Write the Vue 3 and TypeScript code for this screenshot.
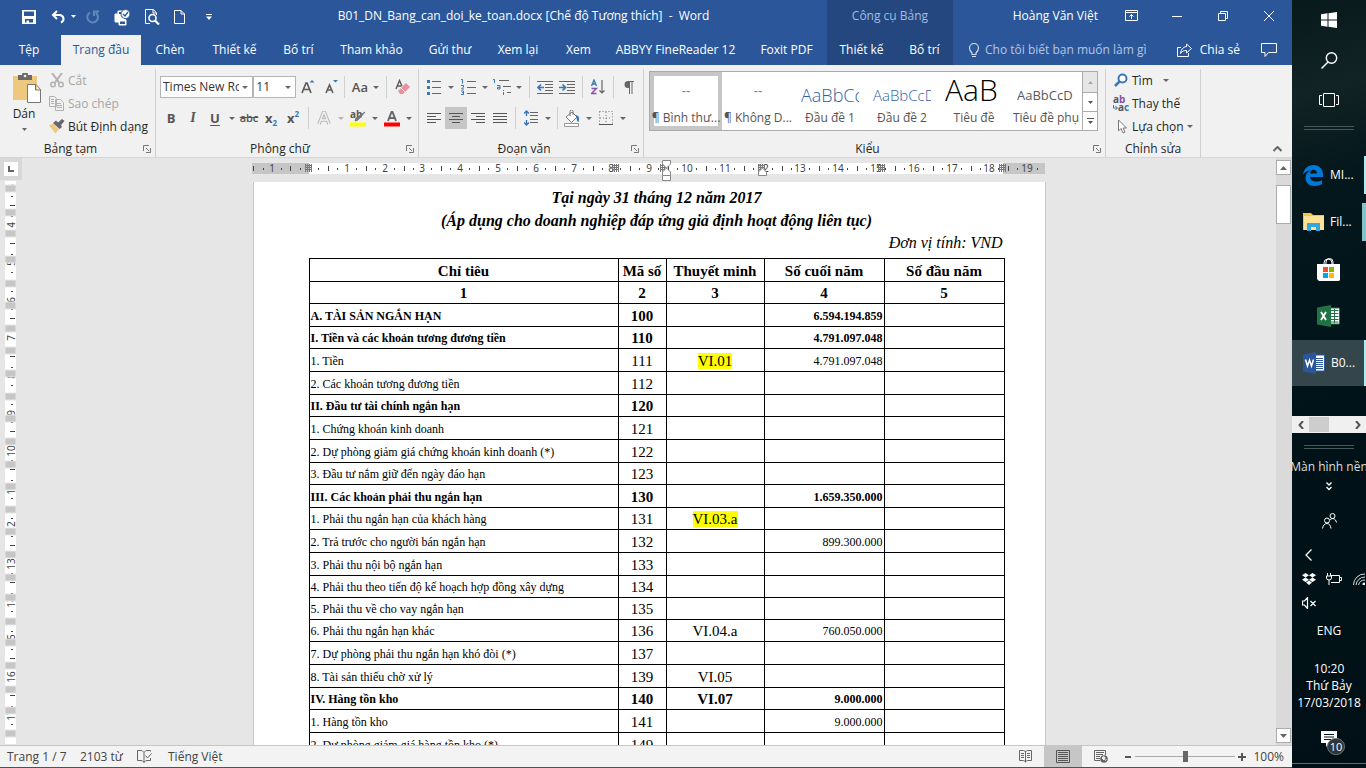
<script setup lang="ts">
import { ref } from 'vue'

interface Row {
  name: string
  code: string
  note?: string
  end?: string
  bold?: boolean
  mark?: boolean
  low?: boolean
}

const rows: Row[] = [
  { name: 'A. TÀI SẢN NGẮN HẠN', code: '100', end: '6.594.194.859', bold: true },
  { name: 'I. Tiền và các khoản tương đương tiền', code: '110', end: '4.791.097.048', bold: true, low: true },
  { name: '1. Tiền', code: '111', note: 'VI.01', end: '4.791.097.048', mark: true },
  { name: '2. Các khoản tương đương tiền', code: '112' },
  { name: 'II. Đầu tư tài chính ngắn hạn', code: '120', bold: true, low: true },
  { name: '1. Chứng khoán kinh doanh', code: '121' },
  { name: '2. Dự phòng giảm giá chứng khoán kinh doanh (*)', code: '122' },
  { name: '3. Đầu tư nắm giữ đến ngày đáo hạn', code: '123', low: true },
  { name: 'III. Các khoản phải thu ngắn hạn', code: '130', end: '1.659.350.000', bold: true },
  { name: '1. Phải thu ngắn hạn của khách hàng', code: '131', note: 'VI.03.a', mark: true, low: true },
  { name: '2. Trả trước cho người bán ngắn hạn', code: '132', end: '899.300.000' },
  { name: '3. Phải thu nội bộ ngắn hạn', code: '133' },
  { name: '4. Phải thu theo tiến độ kế hoạch hợp đồng xây dựng', code: '134', low: true },
  { name: '5. Phải thu về cho vay ngắn hạn', code: '135', low: true },
  { name: '6. Phải thu ngắn hạn khác', code: '136', note: 'VI.04.a', end: '760.050.000', low: true },
  { name: '7. Dự phòng phải thu ngắn hạn khó đòi (*)', code: '137' },
  { name: '8. Tài sản thiếu chờ xử lý', code: '139', note: 'VI.05' },
  { name: 'IV. Hàng tồn kho', code: '140', note: 'VI.07', end: '9.000.000', bold: true, low: true },
  { name: '1. Hàng tồn kho', code: '141', end: '9.000.000' },
  { name: '2. Dự phòng giảm giá hàng tồn kho (*)', code: '149' },
]

const tabs = ['Tệp', 'Trang đầu', 'Chèn', 'Thiết kế', 'Bố trí', 'Tham khảo', 'Gửi thư', 'Xem lại', 'Xem', 'ABBYY FineReader 12', 'Foxit PDF']
const toolTabs = ['Thiết kế', 'Bố trí']

const styles = [
  { label: '¶ Bình thư...', sample: '--', kind: 'dash' },
  { label: '¶ Không D...', sample: '--', kind: 'dash' },
  { label: 'Đầu đề 1', sample: 'AaBbCc', kind: 'h1' },
  { label: 'Đầu đề 2', sample: 'AaBbCcD', kind: 'h2' },
  { label: 'Tiêu đề', sample: 'AaB', kind: 'big' },
  { label: 'Tiêu đề phụ', sample: 'AaBbCcD', kind: 'sub' },
]

// Horizontal ruler: one centimetre is CM pixels, zero sits at the table's left edge.
const CM = 37.8
const ZERO = 57
const across = Array.from({ length: 20 }, (_, i) => i).map((n) => ({ n, x: Math.round(ZERO + n * CM) }))
const columnStops = [57, 364, 412, 510, 630, 751]

// Vertical ruler: numbers run down the page and row borders cover them.
const down = Array.from({ length: 16 }, (_, i) => i + 3).map((n) => ({ n, y: Math.round(157 + (n - 7) * 37.7) }))
const rowStops = [4, 28, 49, 75, 99, 121, 144, 166, 189, 212, 234, 257, 280, 302, 325, 347, 370, 393, 413, 437, 458, 481, 505, 526, 549]

const zoom = ref(50)
const fontName = ref('Times New Roman')
const fontSize = ref('11')
const query = ref('')
</script>

<template>
  <div class="desktop">
    <div class="word">
      <header class="head">
        <div class="titlebar">
          <div class="quick">
            <button aria-label="Lưu" class="q-save"><svg width="14" height="14" viewBox="0 0 14 14"><path fill="#fff" fill-rule="evenodd" d="M0 0h14v14H0zM2 1.500v4.500h10v-4.500zM3 9v3.500h1.500V10.500H7v2h4V9z" /></svg></button>
            <button aria-label="Hoàn tác" class="q-undo"><svg width="26" height="14" viewBox="0 0 26 14"><path d="M6 1L2 5l4 4M2.500 5H9a4.500 4 0 0 1 1 7.500" fill="none" stroke="#fff" stroke-width="2" /><path d="M20 5h5l-2.500 3z" fill="#fff" /></svg></button>
            <button aria-label="Làm lại" class="q-redo"><svg width="14" height="14" viewBox="0 0 14 14"><path d="M4 2.500A5.300 5.300 0 1 0 10 3M8 6V1.500h5" fill="none" stroke="#6585bd" stroke-width="2" /></svg></button>
            <button aria-label="In nhanh" class="q-print"><svg width="17" height="17" viewBox="0 0 17 17"><path d="M4 5V2h5M1 5h6v4h4v4H1zM5 11h7v5H5z" fill="#fff" stroke="#fff" stroke-width="1" /><path d="M6 12.500h5V15H6zM5 3h3v2H5z" fill="#2b579a" /><circle cx="11.500" cy="5" r="4.500" fill="#fff" stroke="#2b579a" /><path d="M9 5l2 2 3-4" fill="none" stroke="#2b579a" stroke-width="1.300" /></svg></button>
            <button aria-label="Xem trước" class="q-view"><svg width="15" height="16" viewBox="0 0 15 16"><path d="M11.500 6V4L8.500.5h-8v14H5M8 .5V4h3" fill="none" stroke="#fff" /><circle cx="7.500" cy="9" r="3.500" fill="#2b579a" stroke="#fff" stroke-width="1.600" /><path d="M10 11.500l4 4" stroke="#fff" stroke-width="2.200" /></svg></button>
            <button aria-label="Tạo mới" class="q-new"><svg width="11" height="14" viewBox="0 0 11 14"><path d="M.5.5h6.500l3.500 3.500v9.500h-10zM7 .5V4h3.500" fill="none" stroke="#fff" /></svg></button>
            <button aria-label="Tùy chỉnh" class="q-more"><svg width="6" height="6" viewBox="0 0 6 6"><path d="M0 0h6v1H0zM0 2.500h6L3 6z" fill="#fff" /></svg></button>
          </div>
          <div class="doc-title">B01_DN_Bang_can_doi_ke_toan.docx [Chế độ Tương thích]&nbsp; -&nbsp; Word</div>
        </div>
        <div class="tool-title">Công cụ Bảng</div>
        <div class="account">
          <span class="user">Hoàng Văn Việt</span>
          <button aria-label="Tùy chọn Ruy-băng"><svg width="13" height="11" viewBox="0 0 13 11"><path d="M.5.500h12v10H.5zM1 2.500h11M6.500 9V4.500M4.500 6.500l2-2 2 2" fill="none" stroke="#fff" /></svg></button>
          <button aria-label="Thu nhỏ"><svg width="10" height="10" viewBox="0 0 10 10"><path d="M0 5.500h10" stroke="#fff" /></svg></button>
          <button aria-label="Khôi phục"><svg width="10" height="10" viewBox="0 0 10 10"><path d="M.5 2.500h7v7h-7zM2.500 2V.5h7v7H8" fill="none" stroke="#fff" /></svg></button>
          <button aria-label="Đóng"><svg width="10" height="10" viewBox="0 0 10 10"><path d="M0 0l10 10M10 0L0 10" stroke="#fff" /></svg></button>
        </div>
        <nav class="tabs">
          <button v-for="(t, i) in tabs" :key="t" :class="{ active: i === 1, file: i === 0 }">{{ t }}</button>
        </nav>
        <nav class="tool-tabs">
          <button v-for="t in toolTabs" :key="t">{{ t }}</button>
        </nav>
        <div class="tell">
          <label class="ask">
            <svg width="12" height="15" viewBox="0 0 12 15"><path d="M4 11.500V10C2.500 8.500 1.500 7.500 1.500 5a4.500 4.500 0 0 1 9 0c0 2.500-1 3.500-2.500 5v1.500zM4 13.500h4" fill="none" stroke="#d0dcf0" stroke-width="1.200" /></svg>
            <input v-model="query" type="text" aria-label="Tìm lệnh" placeholder="Cho tôi biết bạn muốn làm gì" />
          </label>
          <button class="share"><svg width="16" height="15" viewBox="0 0 16 15"><path d="M4 4.500H.5v9h11V10M9.500 1l5 4.500-5 4.500V7.500C7 7.500 5 8 3.500 10.500 4 6.500 6 4 9.500 3.500z" fill="none" stroke="#fff" /></svg>Chia sẻ</button>
          <button class="comment" aria-label="Chú thích"><svg width="16" height="15" viewBox="0 0 16 15"><path d="M.5.5h15v9H7.500L4 13.500v-4H.5z" fill="none" stroke="#fff" /></svg></button>
        </div>
      </header>

      <section class="ribbon">
        <div class="group clip">
          <div class="body clip-body">
            <button class="paste">
              <svg width="30" height="31" viewBox="0 0 30 31"><path d="M1 3h24v24H1z" fill="#edc87e" /><path d="M6 2h4a3 3 0 0 1 6 0h4v5H6z" fill="#6a6a6a" /><circle cx="13" cy="3" r="1.300" fill="#f1f1f1" /><path d="M15.500 11.500h8.500l4.500 5v13h-13zM23.500 12v5h5" fill="#fff" stroke="#777" /></svg>
              <span>Dán</span>
              <svg width="5" height="3" viewBox="0 0 5 3"><path d="M0 0h5L2.500 3z" fill="#666" /></svg>
            </button>
            <div class="stack">
              <button class="off"><svg width="16" height="15" viewBox="0 0 16 15"><path d="M3 0l7 9.500M13 0L6 9.500" stroke="#b1b1b1" stroke-width="2" /><circle cx="4" cy="11.500" r="2.300" fill="none" stroke="#b1b1b1" stroke-width="1.500" /><circle cx="12" cy="11.500" r="2.300" fill="none" stroke="#b1b1b1" stroke-width="1.500" /></svg>Cắt</button>
              <button class="off"><svg width="16" height="15" viewBox="0 0 16 15"><path d="M.5.500h5l2 2v8h-7zM6.500 3.500h5l3 3v8h-8z" fill="#f1f1f1" stroke="#b1b1b1" /><path d="M2 3.500h3M2 5.500h3M2 7.500h3M8 7.500h4M8 9.500h5M8 11.500h5" stroke="#b1b1b1" /></svg>Sao chép</button>
              <button><svg width="16" height="15" viewBox="0 0 16 15"><path d="M0 6.500l4-2 6 6-4 4C5 12 2 9 0 6.500z" fill="#edc87e" /><path d="M4 4l3-2.500 2 2L13 0l2.500 2-3.500 4 1 2-2.500 2z" fill="#666" /></svg>Bút Định dạng</button>
            </div>
          </div>
          <footer><span>Bảng tạm</span><button class="launch" aria-label="Mở Bảng tạm"><svg width="8" height="8" viewBox="0 0 8 8"><path d="M.5 6V.5H6M3 3l3 3M7.500 3v4.500H3" fill="none" stroke="#777" /></svg></button></footer>
        </div>

        <div class="group font">
          <div class="body rows">
            <div class="line">
              <label class="combo face"><select v-model="fontName" aria-label="Phông chữ"><option>Times New Roman</option></select><i class="tri"></i></label>
              <label class="combo size"><select v-model="fontSize" aria-label="Cỡ phông"><option>11</option></select><i class="tri"></i></label>
              <button class="b23" aria-label="Tăng cỡ"><svg width="14" height="16" viewBox="0 0 14 16"><path d="M1 14L5 4h1l4 10M2.500 10.500h6" fill="none" stroke="#5c5c5c" stroke-width="1.700" /><path d="M8.500 3.500h5L11 1z" fill="#3a77b5" /></svg></button>
              <button class="b23" aria-label="Giảm cỡ"><svg width="14" height="16" viewBox="0 0 14 16"><path d="M2 14l3.500-8 3.500 8M3 11h5" fill="none" stroke="#5c5c5c" stroke-width="1.600" /><path d="M9 1h5l-2.500 2.500z" fill="#3a77b5" /></svg></button>
              <i class="sep"></i>
              <button class="b40 aa"><span>Aa</span><i class="tri"></i></button>
              <i class="sep"></i>
              <button class="b30" aria-label="Xóa định dạng"><svg width="16" height="17" viewBox="0 0 16 17"><path d="M1 10L4.500 1.500 7 7M2.500 7h4" fill="none" stroke="#5c5c5c" stroke-width="1.400" /><path d="M3 12l8-8 4 4-7 7H5z" fill="#e8919d" /><path d="M6 9l4 4" stroke="#f1f1f1" /></svg></button>
            </div>
            <div class="line">
              <button class="b22 fb">B</button>
              <button class="b22 fi">I</button>
              <button class="split"><span class="fu">U</span><i class="tri"></i></button>
              <button class="b22 fs">abc</button>
              <button class="b22 fx">x<sub>2</sub></button>
              <button class="b22 fx">x<sup>2</sup></button>
              <i class="sep wide"></i>
              <button class="split" aria-label="Hiệu ứng văn bản"><span><svg width="14" height="14" viewBox="0 0 14 14"><path d="M2 13L6.500 1.500h1L12 13M4 9h6" fill="none" stroke="#b8b8b8" stroke-width="3.500" /><path d="M2 13L6.500 1.500h1L12 13M4 9h6" fill="none" stroke="#f5f5f5" stroke-width="1.400" /></svg></span><i class="tri pale"></i></button>
              <button class="split" aria-label="Tô sáng"><span><svg class="spill" width="16" height="17" viewBox="0 0 16 17"><text x="0" y="8" class="tiny-ab">ab</text><path d="M15 2L8 10l-3 1 1-3z" fill="#777" stroke="#777" /><path d="M0 12.500h16v4H0z" fill="#ff0" /></svg></span><i class="tri"></i></button>
              <button class="split" aria-label="Màu phông"><span><svg width="16" height="17" viewBox="0 0 16 17"><path d="M4 11L7.500 2h1L12 11M5.500 8h5" fill="none" stroke="#666" stroke-width="1.900" /><path d="M0 12.500h16v4H0z" fill="#f00" /></svg></span><i class="tri"></i></button>
            </div>
          </div>
          <footer><span>Phông chữ</span><button class="launch" aria-label="Mở Phông chữ"><svg width="8" height="8" viewBox="0 0 8 8"><path d="M.5 6V.5H6M3 3l3 3M7.500 3v4.500H3" fill="none" stroke="#777" /></svg></button></footer>
        </div>

        <div class="group para">
          <div class="body rows">
            <div class="line">
              <button class="split" aria-label="Dấu đầu dòng"><span><svg width="14" height="15" viewBox="0 0 14 15"><path d="M5 1.500h9M5 7.500h9M5 13.500h9" stroke="#666" /><path d="M0 0h3v3H0zM0 6h3v3H0zM0 12h3v3H0z" fill="#3a77b5" /></svg></span><i class="tri"></i></button>
              <button class="split" aria-label="Đánh số"><span><svg width="15" height="16" viewBox="0 0 15 16"><path d="M6 2.500h9M6 8.500h9M6 14.500h9" stroke="#666" /><path d="M0 .5h1.500V4.500M0 6.500h2.500V8L.5 10H3M0 12h2.500v3.500H0M1 13.700h1" fill="none" stroke="#3a77b5" /></svg></span><i class="tri"></i></button>
              <button class="split" aria-label="Danh sách đa mức"><span><svg width="18" height="16" viewBox="0 0 18 16"><path d="M6 1.500h10M10 7.500h8M14 13.500h4" stroke="#666" /><path d="M0 .5h1.500V4M4 6.500h3V10H4.500V8.300H7M10.500 11v1M10.500 13v3" fill="none" stroke="#3a77b5" /></svg></span><i class="tri"></i></button>
              <i class="sep wide"></i>
              <button class="b22" aria-label="Giảm lề"><svg width="16" height="13" viewBox="0 0 16 13"><path d="M0 .5h16M8 3.500h8M8 6.500h8M8 9.500h8M0 12.500h16" stroke="#666" /><path d="M7 6.500H1.500M4 3.500l-3 3 3 3" fill="none" stroke="#3a77b5" stroke-width="1.700" /></svg></button>
              <button class="b22" aria-label="Tăng lề"><svg width="16" height="13" viewBox="0 0 16 13"><path d="M0 .5h16M8 3.500h8M8 6.500h8M8 9.500h8M0 12.500h16" stroke="#666" /><path d="M0 6.500h5.500M3.500 3.500l3 3-3 3" fill="none" stroke="#3a77b5" stroke-width="1.700" /></svg></button>
              <i class="sep wide"></i>
              <button class="b22" aria-label="Sắp xếp"><svg width="14" height="16" viewBox="0 0 14 16"><path d="M.5 7L3 1l2.500 6M1.500 5h3" fill="none" stroke="#3a77b5" stroke-width="1.300" /><path d="M.5 9.500h5l-5 5h5" fill="none" stroke="#8a4fa8" stroke-width="1.400" /><path d="M11 1v13M8.500 11.500L11 14l2.500-2.500" fill="none" stroke="#666" stroke-width="1.200" /></svg></button>
              <i class="sep wide"></i>
              <button class="b22" aria-label="Hiện dấu đoạn"><svg width="10" height="13" viewBox="0 0 10 13"><path d="M10 0H4a3.500 3.500 0 0 0 0 7h1v6h1V1h1.500v12h1V1H10z" fill="#666" /></svg></button>
            </div>
            <div class="line">
              <button class="b22" aria-label="Căn trái"><svg width="14" height="11" viewBox="0 0 14 11"><path d="M0 .5h14M0 3.500h9M0 6.500h14M0 9.500h9" stroke="#555" /></svg></button>
              <button class="b22 on" aria-label="Căn giữa"><svg width="14" height="11" viewBox="0 0 14 11"><path d="M0 .5h14M3 3.500h8M0 6.500h14M3 9.500h8" stroke="#555" /></svg></button>
              <button class="b22" aria-label="Căn phải"><svg width="14" height="11" viewBox="0 0 14 11"><path d="M0 .5h14M5 3.500h9M0 6.500h14M5 9.500h9" stroke="#555" /></svg></button>
              <button class="b22" aria-label="Căn đều"><svg width="14" height="11" viewBox="0 0 14 11"><path d="M0 .5h14M0 3.500h14M0 6.500h14M0 9.500h14" stroke="#555" /></svg></button>
              <i class="sep wide"></i>
              <button class="split" aria-label="Giãn cách dòng"><span><svg width="14" height="16" viewBox="0 0 14 16"><path d="M6 2.500h8M6 5.500h8M6 9.500h8M6 12.500h8" stroke="#666" /><path d="M2.500 1v5M2.500 10v5M0 3.500L2.500 1 5 3.500M0 12.500L2.500 15 5 12.500" fill="none" stroke="#3a77b5" stroke-width="1.400" /></svg></span><i class="tri"></i></button>
              <i class="sep mid"></i>
              <button class="split" aria-label="Tô bóng"><span><svg width="16" height="17" viewBox="0 0 16 17"><path d="M2 7l6-5 5 5-5.500 5.500zM6 6V1.500a1.500 1.500 0 0 1 3 0V5" fill="#fff" stroke="#777" /><path d="M11 5c4 0 5 3 3.500 7-1 0-2-2-2-5z" fill="#3a77b5" /><path d="M.5 13.500h14v3H.5z" fill="#fff" stroke="#999" /></svg></span><i class="tri"></i></button>
              <button class="split" aria-label="Viền"><span><svg width="14" height="14" viewBox="0 0 14 14"><path d="M.5.500h13v13H.5zM7 1v12M1 7h12" fill="none" stroke="#777" stroke-dasharray="1 2" /><path d="M0 13.500h14" stroke="#555" /></svg></span><i class="tri"></i></button>
            </div>
          </div>
          <footer><span>Đoạn văn</span><button class="launch" aria-label="Mở Đoạn văn"><svg width="8" height="8" viewBox="0 0 8 8"><path d="M.5 6V.5H6M3 3l3 3M7.500 3v4.500H3" fill="none" stroke="#777" /></svg></button></footer>
        </div>

        <div class="group styles">
          <div class="body">
            <div class="gallery">
              <button v-for="(s, i) in styles" :key="s.label" class="style" :class="{ picked: i === 0 }">
                <span class="sample" :class="s.kind">{{ s.sample }}</span>
                <span class="caption">{{ s.label }}</span>
              </button>
              <div class="spin">
                <button class="dim" aria-label="Hàng trên"><svg width="5" height="3" viewBox="0 0 5 3"><path d="M0 3h5L2.500 0z" fill="#aaa" /></svg></button>
                <button aria-label="Hàng dưới"><svg width="5" height="3" viewBox="0 0 5 3"><path d="M0 0h5L2.500 3z" fill="#555" /></svg></button>
                <button aria-label="Thêm kiểu"><svg width="7" height="7" viewBox="0 0 7 7"><path d="M0 .5h7" stroke="#555" /><path d="M1 3h5L3.500 6z" fill="#555" /></svg></button>
              </div>
            </div>
          </div>
          <footer><span>Kiểu</span><button class="launch" aria-label="Mở Kiểu"><svg width="8" height="8" viewBox="0 0 8 8"><path d="M.5 6V.5H6M3 3l3 3M7.500 3v4.500H3" fill="none" stroke="#777" /></svg></button></footer>
        </div>

        <div class="group edit">
          <div class="body">
            <div class="stack">
              <button><svg width="16" height="15" viewBox="0 0 16 15"><circle cx="9.500" cy="5.500" r="4" fill="#fff" stroke="#3a77b5" stroke-width="2" /><path d="M6.500 8.500L2 13" stroke="#3a77b5" stroke-width="2.500" /></svg>Tìm<i class="tri find"></i></button>
              <button><svg class="spill" width="16" height="16" viewBox="0 0 16 16"><text x="0" y="7" class="tiny-ab">a<tspan class="violet">b</tspan></text><text x="5" y="15" class="tiny-ab">a<tspan class="blue">c</tspan></text><path d="M.5 9v3H4M2.500 10l2 2-2 2" fill="none" stroke="#3a77b5" /></svg>Thay thế</button>
              <button><svg width="16" height="16" viewBox="0 0 16 16"><path d="M5.500 1v11l2.500-2.500 2 4.500 2-1-2-4h3.500z" fill="#fff" stroke="#777" /></svg>Lựa chọn<i class="tri"></i></button>
            </div>
          </div>
          <footer><span>Chỉnh sửa</span></footer>
        </div>
        <button class="collapse" aria-label="Thu gọn Ruy-băng"><svg width="9" height="6" viewBox="0 0 9 6"><path d="M.5 5l4-4 4 4" fill="none" stroke="#666" stroke-width="2" /></svg></button>
      </section>

      <main class="work">
        <div class="side">
          <div class="corner"><button aria-label="Điểm dừng tab"><svg width="6" height="6" viewBox="0 0 6 6"><path d="M1 0v5h5" fill="none" stroke="#666" stroke-width="2" /></svg></button></div>
          <svg class="vruler" width="22" height="563" viewBox="0 0 22 563">
            <path d="M5 0h11v563H5z" fill="#fff" />
            <g v-for="d in down" :key="d.n">
              <text :transform="`translate(15 ${d.y}) rotate(-90)`" class="rule">{{ d.n }}</text>
              <path :d="`M11 ${d.y - 9}h2v1h-2zM11 ${d.y + 9}h2v1h-2zM10 ${d.y + 18}h5v1h-5z`" fill="#444" />
            </g>
            <path v-for="y in rowStops" :key="y" :d="`M5 ${y}h11v7H5z`" fill="#c6c6c6" stroke="#e6e6e6" />
          </svg>
        </div>

        <div class="canvas">
          <svg class="hruler" width="793" height="24" viewBox="0 0 793 24">
            <path d="M0 5h793v11H0z" fill="#fff" /><path d="M0 5h57v11H0zM751 5h42v11h-42z" fill="#c6c6c6" />
            <path d="M1 8h1v5H1zM11 10h1v2h-1zM29 10h1v2h-1zM38 8h1v5h-1zM48 10h1v2h-1z" fill="#444" /><text x="20" y="14" class="rule">1</text>
            <g v-for="a in across" :key="a.n">
              <text v-if="a.n" :x="a.x" y="14" class="rule">{{ a.n }}</text>
              <path v-if="a.n < 19" :d="`M${a.x + 9} 10h1v2h-1zM${a.x + 19} 8h1v5h-1zM${a.x + 28} 10h1v2h-1z`" fill="#444" />
            </g>
            <path d="M785 10h1v2h-1z" fill="#444" />
            <path v-for="c in columnStops" :key="c" :d="`M${c - 4} 7.500h7M${c - 4} 9.500h7M${c - 4} 11.500h7M${c - 3.5} 6v8M${c - 1.5} 6v8M${c + 0.5} 6v8M${c + 2.5} 6v8`" stroke="#777" fill="none" />
            <path d="M410.500 2.500h8v3.500l-4 4-4-4zM410.500 17.500V14l4-4 4 4v8.500h-8zM410.500 17.500h8M506.500 17.500V14l4-4 4 4v3.500z" fill="#fff" stroke="#888" />
          </svg>

          <article class="page">
            <h1>Tại ngày 31 tháng 12 năm 2017</h1>
            <h2>(Áp dụng cho doanh nghiệp đáp ứng giả định hoạt động liên tục)</h2>
            <p class="unit">Đơn vị tính: VND</p>
            <table>
              <colgroup><col class="c1" /><col class="c2" /><col class="c3" /><col class="c4" /><col class="c4" /></colgroup>
              <thead>
                <tr><th>Chỉ tiêu</th><th>Mã số</th><th>Thuyết minh</th><th>Số cuối năm</th><th>Số đầu năm</th></tr>
                <tr class="low"><th>1</th><th>2</th><th>3</th><th>4</th><th>5</th></tr>
              </thead>
              <tbody>
                <tr v-for="r in rows" :key="r.code" :class="{ bold: r.bold, low: r.low }">
                  <td class="item">{{ r.name }}</td>
                  <td>{{ r.code }}</td>
                  <td><mark v-if="r.mark">{{ r.note }}</mark><template v-else>{{ r.note }}</template></td>
                  <td class="sum">{{ r.end }}</td>
                  <td></td>
                </tr>
              </tbody>
            </table>
          </article>
        </div>

        <div class="scroll">
          <button aria-label="Cuộn lên"><svg width="7" height="4" viewBox="0 0 7 4"><path d="M0 4h7L3.500 0z" fill="#666" /></svg></button>
          <div class="thumb"></div>
          <button class="end" aria-label="Cuộn xuống"><svg width="7" height="4" viewBox="0 0 7 4"><path d="M0 0h7L3.500 4z" fill="#666" /></svg></button>
        </div>
      </main>

      <footer class="status">
        <span class="pages">Trang 1 / 7</span>
        <span class="words">2103 từ</span>
        <button class="proof" aria-label="Soát lỗi"><svg width="15" height="13" viewBox="0 0 15 13"><path d="M7 2.500L5 .5H.5v10H5l2 2 2-2h4.500V8M7 2.500v10M7 2.500l2-2h4.500v1M8.500 5.500l2 2.500 4-4.500" fill="none" stroke="#666" /></svg></button>
        <span>Tiếng Việt</span>
        <div class="views">
          <button aria-label="Chế độ Đọc"><svg width="13" height="13" viewBox="0 0 13 13"><path d="M6.500 1.500L4.500.5h-4v10h4l2 1 2-1h4V.5h-4zM6.500 1v11.500M2 3.500h3M2 5.500h3M2 7.500h3M8 3.500h3M8 5.500h3M8 7.500h3" fill="none" stroke="#666" /></svg></button>
          <button class="on" aria-label="Bố trí In"><svg width="14" height="13" viewBox="0 0 14 13"><path d="M.5.500h13v12H.5zM2 2.500h10M2 4.500h10M2 6.500h10M2 8.500h10M2 10.500h10" fill="none" stroke="#555" /></svg></button>
          <button aria-label="Bố trí Web"><svg width="14" height="13" viewBox="0 0 14 13"><path d="M6 10.500H.5V.5h11V5M2 2.500h8M2 4.500h7M2 6.500h4M2 8.500h4" fill="none" stroke="#666" /><circle cx="10" cy="9" r="3.800" fill="#666" /><path d="M8 8l2-1.500 1 1.500-1 2zM11 10.500l1.500-1" fill="#f3f3f3" stroke="#f3f3f3" /></svg></button>
        </div>
        <div class="zoom">
          <button aria-label="Thu nhỏ trang"><svg width="6" height="8" viewBox="0 0 6 8"><path d="M0 4h6" stroke="#555" stroke-width="2" /></svg></button>
          <input v-model="zoom" type="range" min="0" max="100" aria-label="Thu phóng" />
          <button aria-label="Phóng to trang"><svg width="8" height="8" viewBox="0 0 8 8"><path d="M0 4h8M4 0v8" stroke="#555" stroke-width="2" /></svg></button>
          <span class="pct">100%</span>
        </div>
      </footer>
    </div>

    <aside class="taskbar">
      <div class="sys">
        <button aria-label="Bắt đầu"><svg width="16" height="16" viewBox="0 0 16 16"><path d="M0 2.200L6.500 1.300v6.200H0zM7.500 1.200L16 0v7.500H7.500zM0 8.500h6.500v6.200L0 13.800zM7.500 8.500H16V16l-8.500-1.200z" fill="#fff" /></svg></button>
        <button aria-label="Tìm kiếm"><svg width="17" height="17" viewBox="0 0 17 17"><circle cx="10.500" cy="6" r="5.200" fill="none" stroke="#fff" stroke-width="1.400" /><path d="M7 10L.5 16.500" stroke="#fff" stroke-width="1.500" /></svg></button>
        <button aria-label="Dạng xem Tác vụ"><svg width="20" height="16" viewBox="0 0 20 16"><path d="M4.500 1.500h11v13h-11zM3 3.500H.5v9H3M17 3.500h2.500v9H17" fill="none" stroke="#fff" /></svg></button>
      </div>
      <div class="grip"></div>
      <div class="apps">
        <button class="app live"><svg width="20" height="21" viewBox="0 0 20 21"><path d="M0 9.500C1 3.500 5 0 10.500 0 16 0 20 4 20 9.500V12H7c.3 3 3 4.500 6 4.500 2.500 0 4.500-.6 6-1.600V19c-2 1.300-4.500 2-7.500 2C6 21 2.500 17.500 2.500 13c0-3.500 2-6.200 4.800-7.500C4.500 5.500 2 7 0 9.500zM7 8.500h7C14 6 12.500 4.700 10.500 4.700S7.300 6 7 8.500z" fill="#0078d7" /></svg><span>MI...</span></button>
        <button class="app live many"><svg width="21" height="18" viewBox="0 0 21 18"><path d="M0 0h8l2 2h11v15H0z" fill="#f3c44a" /><path d="M1 3h20v14H1z" fill="#ffe296" /><path d="M4 10h13v8h-4v-4H8v4H4z" fill="#35a7e0" /></svg><span>Fil...</span></button>
        <button class="app solo" aria-label="Cửa hàng"><svg width="23" height="23" viewBox="0 0 23 23"><path d="M7 7V5a4 4 0 0 1 8 0v2M9 7V4a3 3 0 0 1 7 0v3" fill="none" stroke="#fff" /><path d="M0 6h23v16l-1 1H2l-2-2z" fill="#fff" /><path d="M6 9h5v5H6z" fill="#f25022" /><path d="M12 9h5v5h-5z" fill="#7fba00" /><path d="M6 15h5v5H6z" fill="#00a4ef" /><path d="M12 15h5v5h-5z" fill="#ffb900" /></svg></button>
        <button class="app solo" aria-label="Excel"><svg width="23" height="22" viewBox="0 0 23 22"><path d="M13 3h9.500v16H13z" fill="#fff" stroke="#217346" /><path d="M14 5.500h7.500M14 8.500h7.500M14 11.500h7.500M14 14.500h7.500M14 17h7.500M17.500 4v14" stroke="#217346" /><path d="M0 2.500L14 0v22L0 19.500z" fill="#217346" /><path d="M4 7l5 8M9 7l-5 8" stroke="#fff" stroke-width="1.800" /></svg></button>
        <button class="app live cur"><svg width="22" height="22" viewBox="0 0 22 22"><path d="M12 3h9.500v16H12z" fill="#fff" stroke="#2b579a" /><path d="M13 6.500h7M13 8.500h7M13 10.500h7M13 12.500h7M13 14.500h7M13 16.500h7" stroke="#2b579a" /><path d="M0 2.500L13 0v22L0 19.500z" fill="#2b579a" /><path d="M2.500 7.500L4.500 14 6.500 8l2 6 2-6.500" fill="none" stroke="#fff" stroke-width="1.500" /></svg><span>B0...</span></button>
      </div>
      <div class="hbar">
        <button aria-label="Cuộn trái"><svg width="6" height="8" viewBox="0 0 6 8"><path d="M5 0L1.500 4 5 8" fill="none" stroke="#555" stroke-width="2" /></svg></button>
        <i class="hthumb"></i>
        <button aria-label="Cuộn phải"><svg width="6" height="8" viewBox="0 0 6 8"><path d="M1 0l3.500 4L1 8" fill="none" stroke="#555" stroke-width="2" /></svg></button>
      </div>
      <div class="grip second"></div>
      <div class="desk">Màn hình nền</div>
      <button class="down" aria-label="Thêm"><svg width="6" height="9" viewBox="0 0 6 9"><path d="M.5.500L3 3 5.500.5M.5 5L3 7.500 5.500 5" fill="none" stroke="#fff" stroke-width="1.300" /></svg></button>
      <button class="people" aria-label="Mọi người"><svg width="15" height="16" viewBox="0 0 15 16"><circle cx="5" cy="7.500" r="2.500" fill="none" stroke="#fff" /><circle cx="10.500" cy="3" r="2.500" fill="none" stroke="#fff" /><path d="M.5 15.500C1 12 3 10.500 5 10.500s3.500 1.500 4 5M8 7c1-1 2-1.500 3-1.500 2 .3 3 2 3.500 4" fill="none" stroke="#fff" /></svg></button>
      <div class="tray">
        <button aria-label="Biểu tượng ẩn"><svg width="7" height="12" viewBox="0 0 7 12"><path d="M6.500.5L1 6l5.500 5.500" fill="none" stroke="#fff" stroke-width="1.300" /></svg></button><i></i><i></i>
        <button aria-label="Dropbox"><svg width="14" height="12" viewBox="0 0 14 12"><path d="M3.500 0L7 2.200 3.500 4.500 0 2.200zM10.500 0L14 2.200l-3.500 2.300L7 2.200zM3.500 4.500L7 6.800 3.500 9 0 6.800zM10.500 4.500L14 6.800 10.500 9 7 6.800zM7 7.500l3 2L7 12 4 9.500z" fill="#fff" /></svg></button>
        <button class="power" aria-label="Pin"><svg width="16" height="12" viewBox="0 0 16 12"><path d="M5 2.500h8.500v7H5M14 4.500h1.500v3H14M1.500 0v3M4.500 0v3M.5 3h5v2a2.500 2 0 0 1-5 0zM3 7v5" fill="none" stroke="#fff" /></svg></button>
        <button class="wifi" aria-label="Mạng"><svg width="12" height="12" viewBox="0 0 12 12"><path d="M.5 12A11 11 0 0 1 12 1M3 12a9 9 0 0 1 9-8M5.500 12A6.500 6.500 0 0 1 12 7" fill="none" stroke="#ddd" /><circle cx="11" cy="11" r="1.500" fill="#fff" /></svg></button>
        <button aria-label="Âm lượng"><svg width="14" height="12" viewBox="0 0 14 12"><path d="M.5 4h2L5.500.500v11L2.500 8h-2zM8.500 4l5 5M13.500 4l-5 5" fill="none" stroke="#fff" stroke-width="1.200" /></svg></button>
      </div>
      <div class="lang">ENG</div>
      <div class="clock"><span>10:20</span><span>Thứ Bảy</span><span>17/03/2018</span></div>
      <button class="notify"><svg width="16" height="16" viewBox="0 0 16 16"><path d="M0 0h16v12H8l-3 4v-4H0z" fill="#fff" /><path d="M3 3.500h10M3 6h10M3 8.500h7" stroke="#00141a" /></svg><span class="badge">10</span></button>
      <div class="showdesk"></div>
    </aside>
  </div>
</template>

<style>
body { overflow: hidden; }
</style>

<style scoped>
* { box-sizing: border-box; }
button { margin: 0; padding: 0; border: 0; background: none; color: inherit; font: inherit; display: flex; align-items: center; justify-content: center; }
svg { display: block; flex: none; }
.spill { overflow: visible; }
.desktop { display: flex; height: 100vh; font: 12px/16px "Open Sans", "Noto Sans", sans-serif; color: #262626; overflow: hidden; }
.word { flex: 1; min-width: 0; display: flex; flex-direction: column; border-bottom: 1px solid #2b579a; background: #e6e6e6; }

.head { display: grid; grid-template-columns: auto auto 1fr; grid-template-rows: 35px 30px; background: #2b579a; color: #fff; }
.titlebar { display: flex; align-items: center; padding-bottom: 3px; }
.quick { display: flex; align-items: center; padding-left: 22px; padding-top: 2px; }
.q-undo { margin-left: 15px; }
.q-redo { margin-left: 9px; }
.q-print { margin-left: 14px; }
.q-view { margin-left: 14px; }
.q-new { margin-left: 14px; }
.q-more { margin-left: 21px; }
.doc-title { flex: 1; padding-left: 8px; text-align: center; white-space: nowrap; }
.tool-title { display: flex; align-items: center; justify-content: center; padding-bottom: 3px; background: #23477e; color: #a5bce0; }
.account { display: flex; align-items: center; justify-content: flex-end; padding-bottom: 4px; }
.account button { width: 46px; height: 24px; }
.user { padding-right: 10px; }
.tabs { display: grid; grid-template-columns: 61px 80px 58px 71px 57px 89px 68px 68px 53px 141px 81px; }
.tabs .file { padding-right: 3px; }
.tabs .active { background: #f1f1f1; color: #2b579a; }
.tool-tabs { display: grid; grid-template-columns: 69px 57px; background: #23477e; }
.tell { display: flex; align-items: center; padding-left: 15px; }
.ask { display: flex; flex: 1; align-items: center; gap: 5px; }
.ask input { flex: 1; min-width: 0; padding: 0; border: 0; outline: 0; background: none; color: #fff; font: inherit; }
.ask input::placeholder { color: #b3c6e6; opacity: 1; }
.share { gap: 7px; }
.comment { margin: 0 15px 0 21px; }

.ribbon { display: flex; padding-top: 4px; background: #f1f1f1; border-bottom: 1px solid #d5d5d5; }
.group { display: flex; flex-direction: column; height: 88px; border-right: 1px solid #d0d0d0; }
.clip { width: 156px; }
.font { width: 263px; }
.para { width: 225px; }
.styles { width: 462px; }
.edit { width: 95px; }
.body { flex: 1; }
.group footer { display: flex; align-items: center; height: 16px; padding-right: 2px; }
.group footer span { flex: 1; text-align: center; }
.launch { width: 12px; height: 12px; }
.edit footer { padding-right: 0; }
.clip-body { display: flex; padding-left: 12px; }
.paste { flex-direction: column; justify-content: flex-start; width: 30px; padding-top: 4px; }
.paste span { margin: 2px 6px 6px 0; }
.paste svg:last-child { margin-right: 6px; }
.clip .stack { padding-left: 7px; }
.stack button { height: 23px; gap: 3px; white-space: nowrap; }
.off { color: #a6a6a6; }
.edit .stack { padding-left: 7px; }
.tri { display: block; border: 3px solid transparent; border-top-color: #666; border-bottom: 0; }
.tri.pale { border-top-color: #b5b5b5; }
.tri.find { margin-left: 7px; }
.rows { padding: 7px 0 0 4px; }
.line { display: flex; align-items: center; height: 22px; }
.line + .line { margin-top: 9px; }
.sep { width: 1px; height: 22px; margin: 0 1px; background: #d0d0d0; }
.sep.wide { margin: 0 4px; }
.sep.mid { margin: 0 3px; }
.combo { display: grid; align-items: center; height: 22px; border: 1px solid #b5b5b5; background: #fff; }
.combo select { grid-area: 1 / 1; width: 100%; height: 20px; padding: 0 13px 0 2px; border: 0; outline: 0; appearance: none; background: none; color: #333; font: inherit; }
.combo .tri { grid-area: 1 / 1; justify-self: end; margin-right: 4px; }
.face { width: 94px; }
.size { width: 43px; margin-right: 1px; }
.b22 { width: 22px; height: 22px; }
.b23 { width: 23px; height: 22px; }
.b30 { width: 30px; height: 22px; }
.b40 { width: 40px; height: 22px; gap: 5px; }
.aa { color: #555; font-weight: 600; font-size: 13px; }
.on { background: #c6c6c6; }
.split { width: 34px; height: 22px; display: grid; grid-template-columns: 22px 12px; }
.split span { display: flex; justify-content: center; }
.split .tri { justify-self: center; }
.fb, .fx { font-weight: 700; color: #555; font-size: 13px; }
.fi { font: italic 700 14px "Liberation Serif", serif; color: #555; }
.split .fu { font-weight: 700; font-size: 13px; color: #555; text-decoration: underline; text-underline-offset: 2px; }
.fs { font-size: 11px; font-weight: 600; color: #555; text-decoration: line-through; }
.fx sub, .fx sup { font-size: 8px; line-height: 8px; color: #3a77b5; }
.fx sub { align-self: flex-end; margin-bottom: 2px; }
.fx sup { align-self: flex-start; margin-top: 3px; }
.tiny-ab { font: 700 10px "Open Sans", sans-serif; fill: #555; }
.violet { fill: #8a4fa8; }
.blue { fill: #3a77b5; }

.styles .body { padding: 2px 7px 0 5px; }
.gallery { display: grid; grid-template-columns: repeat(6, 72px) 1fr; height: 60px; border: 1px solid #ababab; background: #fff; }
.style { flex-direction: column; justify-content: flex-start; border: 4px solid transparent; }
.style.picked { border-color: #c6c6c6; }
.sample { display: flex; align-items: center; width: 58px; height: 34px; padding-top: 4px; overflow: hidden; white-space: nowrap; font-family: "Open Sans", sans-serif; font-weight: 300; }
.dash { justify-content: center; color: #a0806a; font-size: 14px; font-weight: 400; height: 30px; padding: 0; }
.dash + .caption { margin-top: 4px; }
.h1 { font-size: 18px; color: #2e5fa3; }
.h2 { font-size: 15px; color: #2e5fa3; }
.big { font-size: 30px; line-height: 24px; color: #000; align-items: flex-end; padding: 0; height: 26px; }
.big + .caption { margin-top: 8px; }
.sub { font-size: 13px; font-weight: 400; color: #5a5a5a; }
.caption { color: #555; white-space: nowrap; }
.spin { display: grid; grid-template-rows: 21px 19px 18px; border-left: 1px solid #ababab; }
.spin button { border-bottom: 1px solid #ababab; }
.spin button:last-child { border-bottom: 0; }
.dim { background: #e6e6e6; }
.collapse { margin: auto 10px 5px auto; }

.work { flex: 1; min-height: 0; display: grid; grid-template-columns: 22px minmax(0, 1fr) 16px; overflow: hidden; }
.side { overflow: hidden; }
.corner { height: 22px; padding: 4px; background: #d8d8d8; margin-bottom: 1px; }
.corner button { width: 14px; height: 14px; background: #fff; }
.canvas { min-width: 0; overflow: hidden; display: flex; flex-direction: column; align-items: center; }
.hruler { margin-right: 1px; }
.rule { font: 10px "Noto Sans", sans-serif; fill: #444; text-anchor: middle; }
.page { width: 793px; padding: 4px 40px 60px 55px; border: solid #c6c6c6; border-width: 0 1px; background: #fff; color: #000; font-family: "Liberation Serif", "Times New Roman", serif; }
.page h1, .page h2 { margin: 0; font: italic 700 16px/23px "Liberation Serif", serif; text-align: center; }
.unit { margin: 0; padding: 0 2px 4px 0; font-size: 16px; line-height: 22px; font-style: italic; text-align: right; }
table { width: 696px; table-layout: fixed; border-collapse: collapse; font-size: 15px; line-height: 18px; }
.c1 { width: 309px; }
.c2 { width: 48px; }
.c3 { width: 98px; }
.c4 { width: 120px; }
tr { height: 23px; }
tr.low { height: 22px; }
th, td { padding: 1px 1px 0; border: 1px solid #000; text-align: center; white-space: nowrap; }
.item { text-align: left; font-size: 12px; }
.sum { text-align: right; font-size: 12px; }
.bold td { font-weight: 700; }
mark { background: #ff0; color: inherit; }
.scroll { display: flex; flex-direction: column; padding: 2px 1px 2px 0; background: #dadada; }
.scroll button { height: 15px; border: 1px solid #ababab; background: #fff; }
.thumb { height: 39px; margin-top: 10px; border: 1px solid #ababab; background: #fff; }
.scroll .end { margin-top: auto; }

.status { display: flex; align-items: center; height: 22px; border-top: 1px solid #c6c6c6; background: #f3f3f3; padding-left: 7px; color: #444; }
.pages { width: 73px; }
.words { width: 57px; }
.proof { width: 15px; margin-right: 16px; }
.views { display: flex; align-self: stretch; margin-left: auto; }
.views button { width: 38px; }
.zoom { display: flex; align-items: center; padding: 0 8px 0 5px; }
.zoom input { appearance: none; width: 100px; height: 12px; margin: 0 3px 0 4px; background: linear-gradient(#aaa, #aaa) center / 100% 1px no-repeat; }
.zoom input::-webkit-slider-thumb { appearance: none; width: 5px; height: 11px; background: #666; }
.pct { width: 38px; text-align: right; }

.taskbar { flex: none; width: 74px; display: flex; flex-direction: column; background: linear-gradient(165deg, #07191b 0, #122324 12%, #04171c 24%, #001318 55%, #001016 100%); color: #fff; }
.sys button { width: 100%; height: 40px; }
.grip { height: 4px; margin: 6px 12px 0; border: solid #46585a; border-width: 1px 0; }
.apps { margin-top: 22px; }
.app { position: relative; justify-content: flex-start; width: 100%; height: 46px; margin-bottom: 1px; padding-left: 11px; gap: 6px; }
.app svg { margin-right: auto; }
.app span { width: 36px; text-align: left; }
.app.solo { padding-left: 25px; }
.app.live::after { content: ""; position: absolute; right: 0; top: 4px; width: 2px; height: 38px; background: #a9eef5; }
.app.many::after { width: 4px; background: #83c2c8; }
.app.cur { background: #34464b; }
.app.cur::after { top: 0; height: 46px; }
.hbar { display: flex; align-items: center; height: 17px; margin-top: 29px; background: #f0f0f0; }
.hbar button { width: 17px; height: 17px; }
.hthumb { width: 20px; height: 15px; margin-right: auto; background: #cdcdcd; }
.second { margin-top: 12px; }
.desk { display: flex; justify-content: center; margin-top: 10px; white-space: nowrap; color: #ddd; }
.down { margin-top: 7px; }
.people { margin-top: 22px; }
.tray { display: grid; grid-template-columns: 33px 17px 24px; grid-auto-rows: 24px; margin-top: 14px; }
.tray button { justify-self: end; width: 33px; }
.tray .power { width: 17px; }
.tray .wifi { width: 14px; }
.lang { margin-top: 8px; text-align: center; }
.clock { display: flex; flex-direction: column; margin-top: 21px; line-height: 17px; text-align: center; white-space: nowrap; }
.notify { position: relative; width: 16px; margin: 20px auto 0 29px; }
.badge { position: absolute; left: 6px; top: 7px; width: 18px; height: 17px; border: 1px solid #6b7679; border-radius: 9px; background: #2c3739; font-size: 11px; line-height: 15px; text-align: center; }
.showdesk { margin-top: auto; height: 5px; border-top: 1px solid #5d6b6e; }
</style>
